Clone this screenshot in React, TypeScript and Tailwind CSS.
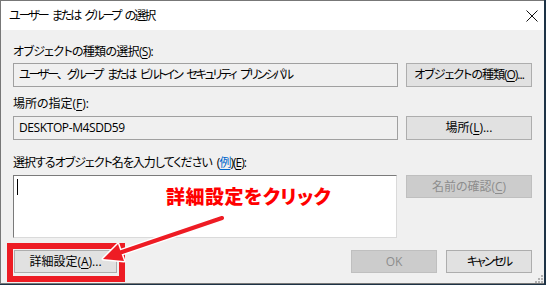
import React from "react";

const Btn = ({
  children,
  className = "",
  disabled = false,
}: {
  children: React.ReactNode;
  className?: string;
  disabled?: boolean;
}) => (
  <div
    className={
      "flex items-center justify-center whitespace-nowrap border " +
      (disabled
        ? "bg-[#cccccc] border-[#bfbfbf] text-[#8d8d8d] "
        : "bg-[#e1e1e1] border-[#adadad] text-black ") +
      className
    }
  >
    {children}
  </div>
);

const U = ({ children }: { children: React.ReactNode }) => (
  <span className="underline underline-offset-2">{children}</span>
);

export default function App() {
  return (
    <div className="relative w-[546px] h-[285px] overflow-hidden bg-[#1d3346] font-['Open_Sans','Noto_Sans_CJK_JP',sans-serif] text-[12px] leading-[16px] text-black [font-feature-settings:'palt']">
      <div className="flex flex-col w-[544px] h-[284px] bg-[#f0f0f0] border-t border-l border-b border-[#777777]">
        {/* title bar */}
        <div className="flex items-center justify-between h-[29px] bg-white pl-[8px] pr-[8px]">
          <span className="text-[12px] tracking-[-2px] [word-spacing:3px] whitespace-pre">ユーザー または グループ の選択</span>
          <svg width="12" height="12" viewBox="0 0 12 12" className="mr-[-2px]">
            <path d="M0.5 0.5 L11.5 11.5 M11.5 0.5 L0.5 11.5" stroke="#111" strokeWidth="1" />
          </svg>
        </div>

        {/* body */}
        <div className="flex flex-col px-[12px]">
          <div className="mt-[14px] h-[16px] tracking-[-0.7px] whitespace-nowrap">
            オブジェクトの種類の選択(<U>S</U>):
          </div>
          <div className="flex mt-[3px] gap-[8px]">
            <div className="w-[385px] h-[24px] border border-[#a0a0a0] bg-[#f0f0f0] flex items-center pl-[5px] tracking-[-2.2px] [word-spacing:4px] whitespace-pre">
              ユーザー<span className="[font-feature-settings:normal]">、</span>グループ または ビルトイン セキュリティ プリンシパル
            </div>
            <Btn className="w-[126px] h-[24px] tracking-[-1px]">
              オブジェクトの種類(<U>O</U>)...
            </Btn>
          </div>

          <div className="mt-[9px] h-[16px]">
            場所の指定(<U>F</U>):
          </div>
          <div className="flex mt-[4px] gap-[8px]">
            <div className="w-[385px] h-[24px] border border-[#a0a0a0] bg-[#f0f0f0] flex items-center pl-[5px] tracking-[-0.4px]">
              DESKTOP-M4SDD59
            </div>
            <Btn className="w-[126px] h-[24px]">
              場所(<U>L</U>)...
            </Btn>
          </div>

          <div className="mt-[15px] h-[16px] tracking-[-1px] [word-spacing:3px] whitespace-nowrap">
            選択するオブジェクト名を入力してください (<span className="text-[#0066cc] underline underline-offset-2">例</span>)(<U>E</U>):
          </div>
          <div className="flex mt-[4px] gap-[9px] items-start">
            <div className="w-[384px] h-[63px] bg-white border-t border-l border-[#7a7a7a] border-r border-b border-r-[#dadada] border-b-[#dadada] pt-[3px] pl-[3px]">
              <div className="w-[1px] h-[16px] bg-black" />
            </div>
            <Btn disabled className="w-[126px] h-[23px]">
              名前の確認(<U>C</U>)
            </Btn>
          </div>

          <div className="flex mt-[12px] justify-between items-center">
            <Btn className="ml-[1px] w-[103px] h-[23px]">
              詳細設定(<U>A</U>)...
            </Btn>
            <div className="flex gap-[9px]">
              <Btn disabled className="w-[86px] h-[23px]">
                OK
              </Btn>
              <Btn className="w-[86px] h-[23px] tracking-[-2px]">キャンセル</Btn>
            </div>
          </div>
        </div>
      </div>

      {/* resize grip */}
      <svg className="absolute left-[534px] top-[274px]" width="10" height="10" viewBox="0 0 10 10">
        <g fill="#b0b0b0">
          <rect x="7" y="1" width="2" height="2" />
          <rect x="4" y="4" width="2" height="2" />
          <rect x="7" y="4" width="2" height="2" />
          <rect x="1" y="7" width="2" height="2" />
          <rect x="4" y="7" width="2" height="2" />
          <rect x="7" y="7" width="2" height="2" />
        </g>
      </svg>

      {/* red annotation frame */}
      <div className="absolute left-[7px] top-[243px] w-[118px] h-[39px] border-[6px] border-[#ed1c24]" />

      {/* annotation text */}
      <div className="absolute left-[166px] top-[184px] text-[#ff0000] text-[19px] leading-[24px] font-black tracking-[0.5px] font-['Noto_Sans_CJK_JP',sans-serif] [font-feature-settings:'palt']">
        詳細設定をクリック
      </div>

      {/* arrow */}
      <svg className="absolute left-0 top-0" width="546" height="285" viewBox="0 0 546 285">
        <line x1="222" y1="218" x2="116" y2="254" stroke="#ffffff" strokeWidth="7" strokeLinecap="round" />
        <polygon points="103,259 118,244 124,261" fill="#ffffff" stroke="#ffffff" strokeWidth="3" strokeLinejoin="round" />
        <line x1="222" y1="218" x2="116" y2="254" stroke="#ee1c24" strokeWidth="4" strokeLinecap="round" />
        <polygon points="103,259 118,244 124,261" fill="#ee1c24" />
      </svg>
    </div>
  );
}
